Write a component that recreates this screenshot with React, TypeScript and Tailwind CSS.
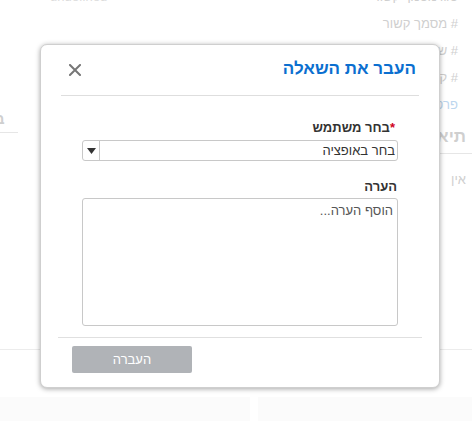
import React from "react";

const font = "font-['Liberation_Sans','DejaVu_Sans',sans-serif]";

function BackgroundPage() {
  return (
    <div className="relative h-[421px] w-[472px] overflow-hidden bg-white">
      {/* faded page behind the dialog */}
      <div className="flex h-[397px] flex-col">
        <div className="-mt-[12px] flex shrink-0 items-start justify-between pl-[50px] pr-[14px]">
          <span className="text-[13px] leading-[17px] text-[#dcdcdc]">undefined</span>
          <div dir="rtl" className="flex flex-col items-start gap-[10px] text-[13px] leading-[17px] text-[#cfcfcf]">
            <span>סוג מסמך קשור</span>
            <span># מסמך קשור</span>
            <span># שדה</span>
            <span># קובץ</span>
            <span className="text-[#bcd6ee]">פרטים</span>
          </div>
        </div>
        <div className="flex shrink-0 items-start justify-between">
          <div className="-mt-[3px] w-[18px] overflow-hidden border-b border-[#e6e6e6] pb-[4px]">
            <span className="-ml-[5px] block text-[15px] font-bold leading-[18px] text-[#cfcfcf]">ב</span>
          </div>
          <div dir="rtl" className="mt-[14px] flex w-[32px] flex-col">
            <span className="whitespace-nowrap border-b border-[#e6e6e6] pb-[6px] pr-[6px] text-[17px] font-bold leading-[20px] text-[#cfcfcf]">
              תיאור
            </span>
            <span className="mt-[17px] whitespace-nowrap pr-[6px] text-[13px] leading-[17px] text-[#cfcfcf]">אין</span>
          </div>
        </div>
        <div className="mb-[47px] mt-auto border-b border-[#ececec]" />
      </div>
      <div className="flex h-[24px] gap-[8px]">
        <div className="w-[250px] bg-[#fbfbfb]" />
        <div className="flex-1 bg-[#fbfbfb]" />
      </div>
    </div>
  );
}

function TransferDialog() {
  return (
    <div
      dir="rtl"
      className="absolute left-[40px] top-[44px] flex h-[344px] w-[400px] flex-col rounded-[7px] border border-[#cfcfcf] bg-white shadow-[0_1px_5px_rgba(0,0,0,0.35)]"
    >
      <div className="mx-[20px] flex h-[51px] shrink-0 items-center justify-between border-b border-[#dedede] pb-[2px] pl-[8px] pr-[3px]">
        <h2 className="text-[17px] font-bold leading-[20px] text-[#0b6fd0]">העבר את השאלה</h2>
        <svg width="12" height="12" viewBox="0 0 12 12" className="mt-[1px]">
          <path d="M1 1 L11 11 M11 1 L1 11" stroke="#777" strokeWidth="2" strokeLinecap="square" />
        </svg>
      </div>

      <div className="flex shrink-0 flex-col px-[41px] pt-[24px]">
        <label className="pr-[3px] text-[13px] font-bold leading-[15px] text-[#333]">
          <span className="text-[#d0021b]">*</span>בחר משתמש
        </label>
        <div className="mt-[5px] flex h-[21px] items-center rounded-[3px] border border-[#c8c8c8] bg-white">
          <span className="flex-1 pr-[2px] text-[13px] leading-[15px] text-[#333]">בחר באופציה</span>
          <span className="flex h-full w-[17px] items-center justify-center border-r border-[#c8c8c8]">
            <svg width="9" height="6" viewBox="0 0 9 6">
              <path d="M0 0 H9 L4.5 6 Z" fill="#333" />
            </svg>
          </span>
        </div>

        <label className="mt-[18px] pr-[1px] text-[13px] font-bold leading-[15px] text-[#333]">הערה</label>
        <div className="mt-[4px] h-[128px] rounded-[3px] border border-[#c8c8c8] px-[4px] pt-[4px] text-[13px] leading-[15px] text-[#555]">
          הוסף הערה...
        </div>
      </div>

      <div className="mx-[17px] mt-[11px] flex shrink-0 justify-end border-t border-[#e0e0e0] pl-[14px] pt-[8px]">
        <button className="h-[27px] w-[120px] rounded-[2px] bg-[#b0b3b7] text-[13px] text-white">
          העברה
        </button>
      </div>
    </div>
  );
}

export default function App() {
  return (
    <div className={`relative h-[421px] w-[472px] overflow-hidden ${font}`}>
      <BackgroundPage />
      <TransferDialog />
    </div>
  );
}
